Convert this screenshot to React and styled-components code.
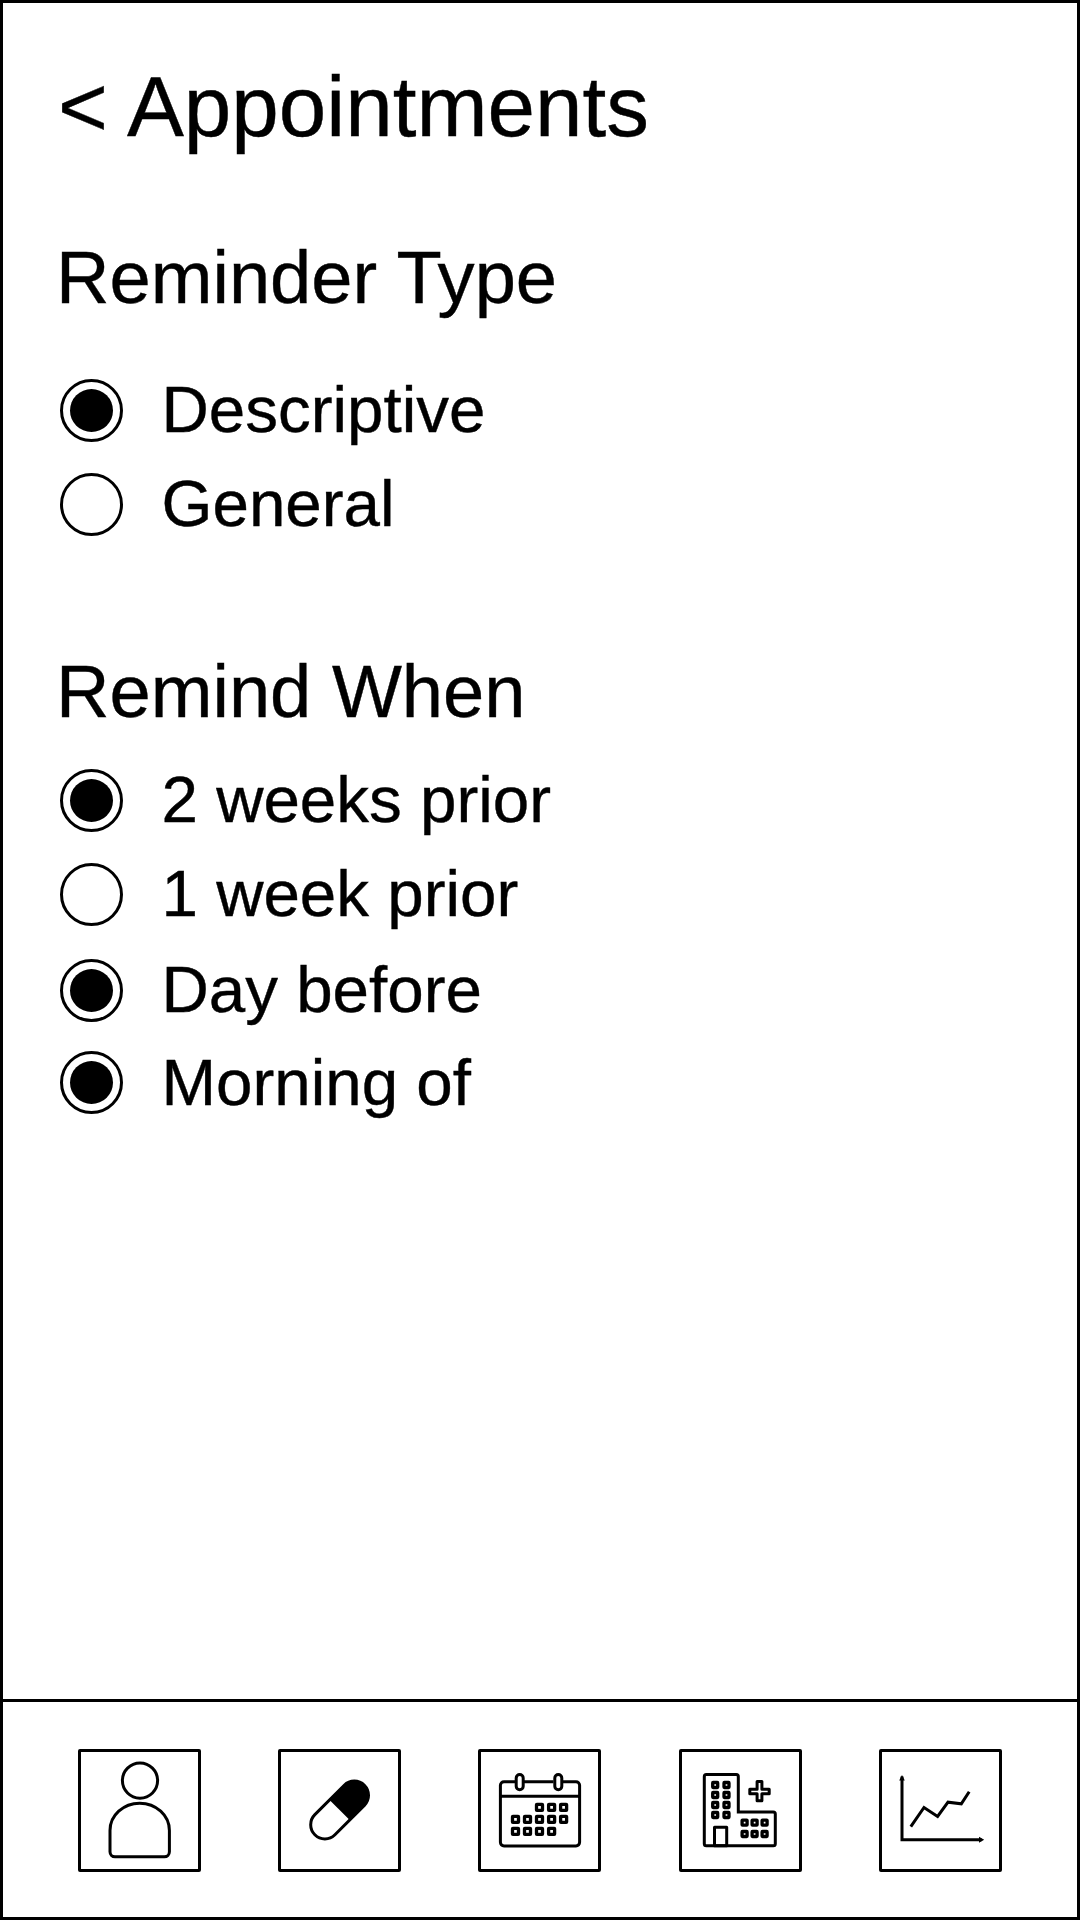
import React from "react";
import styled, { createGlobalStyle } from "styled-components";

const GlobalStyle = createGlobalStyle`
  * { box-sizing: border-box; }
  body { margin: 0; background: #fff; }
`;

const Screen = styled.div`
  width: 1080px;
  height: 1920px;
  margin-bottom: 1px;
  display: flex;
  flex-direction: column;
  border: 3px solid #000;
  background: #fff;
  color: #000;
  font-family: "Liberation Sans", Arial, sans-serif;
  -webkit-text-stroke: 0.4px #000;
`;

const Content = styled.main`
  flex: 1;
  padding: 54px 54px 0;
`;

const Title = styled.h1`
  margin: 0 0 0 1px;
  font-size: 85.4px;
  font-weight: 400;
  line-height: 100px;
  white-space: pre;
`;

const Section = styled.section`
  display: flex;
  flex-direction: column;
  margin-top: ${(p) => p.$top}px;
`;

const Heading = styled.h2`
  margin: 0 0 ${(p) => p.$gap}px -1px;
  font-size: 74.1px;
  font-weight: 400;
  line-height: 84px;
  white-space: nowrap;
`;

const Option = styled.label`
  display: flex;
  align-items: center;
  gap: 38.5px;
  height: ${(p) => p.$height || 94}px;
  padding-left: 3px;
`;

const Radio = styled.span`
  flex: none;
  display: grid;
  place-items: center;
  width: 63px;
  height: 63px;
  border: 3px solid #000;
  border-radius: 50%;

  &::after {
    content: "";
    width: 43px;
    height: 43px;
    border-radius: 50%;
    background: ${(p) => (p.$checked ? "#000" : "transparent")};
  }
`;

const OptionText = styled.span`
  font-size: 65.5px;
  line-height: 76px;
  white-space: nowrap;
`;

const TabBar = styled.nav`
  height: 218px;
  padding: 47px 0 0 74.9px;
  display: flex;
  gap: 77.25px;
  border-top: 3px solid #000;
`;

const Tab = styled.button`
  flex: none;
  width: 123px;
  height: 123px;
  padding: 0;
  border: 3px solid #000;
  border-radius: 2px;
  background: #fff;

  svg { display: block; margin: -3px; }
`;

const Icon = ({ children, label }) => (
  <svg width="123" height="123" viewBox="0 0 123 123" fill="none" stroke="#000" strokeWidth="3" role="img" aria-label={label}>
    {children}
  </svg>
);

const Cells = ({ at, size, strokeWidth = 3.3 }) =>
  at.map(([x, y]) => (
    <rect key={x + "-" + y} x={x - size / 2} y={y - size / 2} width={size} height={size} rx="0.4" strokeWidth={strokeWidth} strokeLinejoin="round" />
  ));

const ProfileIcon = () => (
  <Icon label="Profile">
    <circle cx="62" cy="31.6" r="17.6" />
    <path d="M32 81.5a29.7 27.3 0 0 1 59.4 0v21.3a5 5 0 0 1-5 5H37a5 5 0 0 1-5-5z" />
  </Icon>
);

const PillIcon = () => (
  <Icon label="Medication">
    <g transform="rotate(-45 61.6 61)">
      <rect x="26.6" y="46.8" width="70" height="28.4" rx="14.2" />
      <path d="M61.6 46.8h20.8a14.2 14.2 0 0 1 0 28.4H61.6z" fill="#000" stroke="none" />
    </g>
  </Icon>
);

const CalendarIcon = () => (
  <Icon label="Calendar">
    <path d="M37 32.7H26a3.6 3.6 0 0 0-3.6 3.6v57a3.6 3.6 0 0 0 3.6 3.6h72a3.6 3.6 0 0 0 3.6-3.6v-57a3.6 3.6 0 0 0-3.6-3.6H84.5M46 32.7h29.5M22.4 47.2h79.2" />
    <rect x="38.2" y="25.5" width="7" height="15.2" rx="3.5" />
    <rect x="76.8" y="25.5" width="7" height="15.2" rx="3.5" />
    <Cells
      size={6}
      at={[[61.5, 58.3], [73.6, 58.3], [85.6, 58.3], [37.5, 70.4], [49.5, 70.4], [61.5, 70.4], [73.6, 70.4], [85.6, 70.4], [37.5, 82.4], [49.5, 82.4], [61.5, 82.4], [73.6, 82.4]]}
    />
  </Icon>
);

const HospitalIcon = () => (
  <Icon label="Hospital">
    <path d="M27.3 25.4h30a2 2 0 0 1 2 2v35.6h35a2 2 0 0 1 2 2v29.8a2 2 0 0 1-2 2h-67a2 2 0 0 1-2-2V27.4a2 2 0 0 1 2-2z" />
    <path d="M35.5 96.8V78.2h12.2v18.6z" strokeLinejoin="round" />
    <path d="M78.1 32.4h4.8v7.8h7.3v4.6h-7.3v7h-4.8v-7h-7.3v-4.6h7.3z" strokeLinejoin="round" />
    <Cells
      size={5}
      at={[[36.2, 36], [47.5, 36], [36.2, 46], [47.5, 46], [36.2, 56], [47.5, 56], [36.2, 66], [47.5, 66], [65.6, 73.7], [75.6, 73.7], [85.6, 73.7], [65.6, 85], [75.6, 85], [85.6, 85]]}
    />
  </Icon>
);

const ChartIcon = () => (
  <Icon label="Trends">
    <path d="M23 29v61.7h78" strokeLinecap="square" />
    <path d="M23 26l2.8 5.5h-5.6zM105.2 90.7l-5.2-3v6z" fill="#000" stroke="none" />
    <path d="M31.8 77.7L45 58.5l13.6 9L69 53.2l13.3 1.6L90.2 42.7" />
  </Icon>
);

const reminderTypes = [
  { label: "Descriptive", checked: true },
  { label: "General" },
];

const reminderTimes = [
  { label: "2 weeks prior", checked: true },
  { label: "1 week prior", height: 94 },
  { label: "Day before", checked: true, height: 98 },
  { label: "Morning of", checked: true, height: 87 },
];

const OptionList = ({ options }) =>
  options.map((o) => (
    <Option key={o.label} $height={o.height}>
      <Radio $checked={o.checked} role="checkbox" aria-checked={!!o.checked} />
      <OptionText>{o.label}</OptionText>
    </Option>
  ));

export default function App() {
  return (
    <>
      <GlobalStyle />
      <Screen>
        <Content>
          <Title>{"< Appointments"}</Title>
          <Section $top={79}>
            <Heading $gap={43}>Reminder Type</Heading>
            <OptionList options={reminderTypes} />
          </Section>
          <Section $top={99}>
            <Heading $gap={19}>Remind When</Heading>
            <OptionList options={reminderTimes} />
          </Section>
        </Content>
        <TabBar>
          <Tab><ProfileIcon /></Tab>
          <Tab><PillIcon /></Tab>
          <Tab><CalendarIcon /></Tab>
          <Tab><HospitalIcon /></Tab>
          <Tab><ChartIcon /></Tab>
        </TabBar>
      </Screen>
    </>
  );
}
